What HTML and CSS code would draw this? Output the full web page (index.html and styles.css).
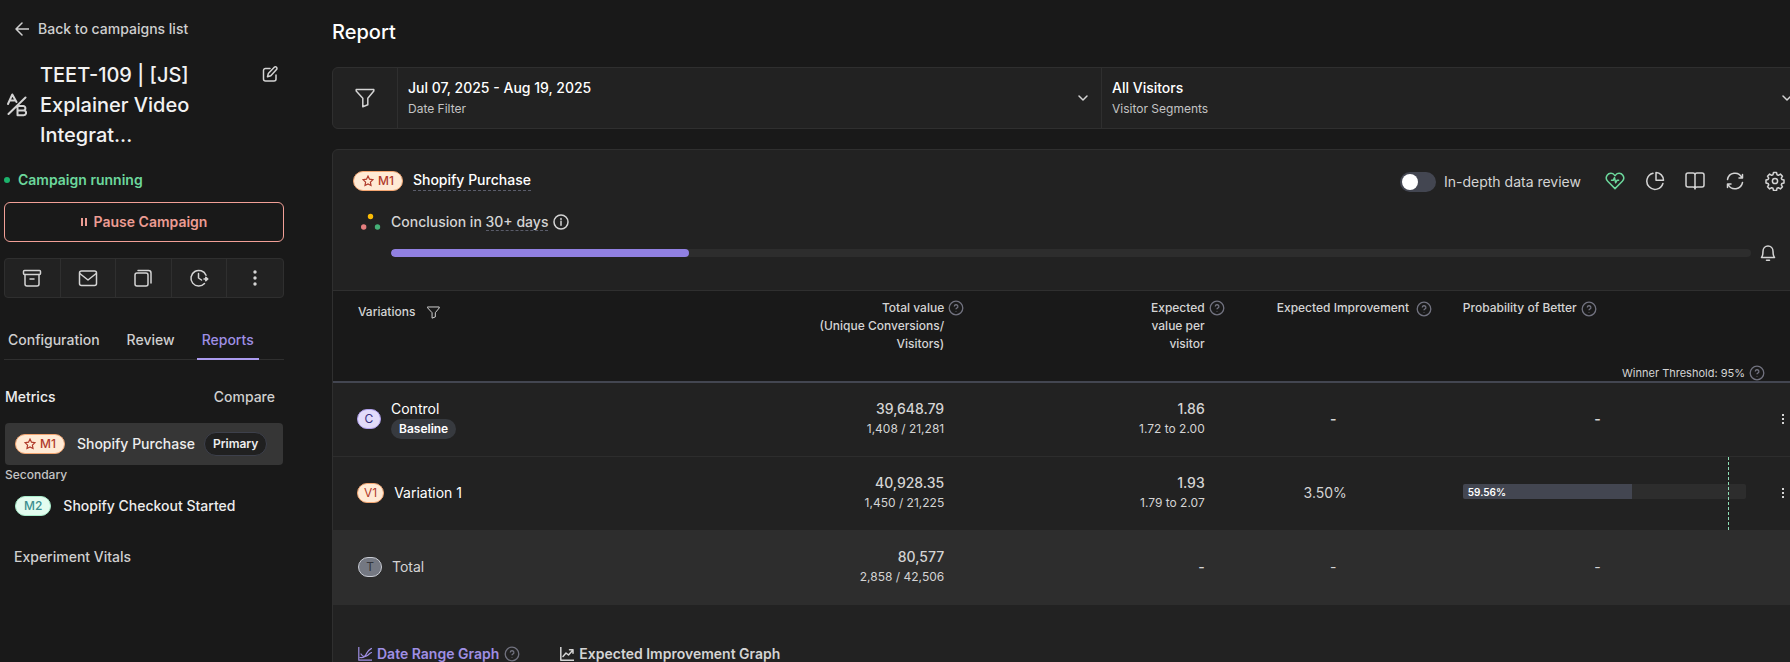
FILE: index.html
```html
<!DOCTYPE html>
<html lang="en">
<head>
<meta charset="utf-8">
<title>Campaign report</title>
<link rel="stylesheet" href="styles.css">
</head>
<body>
<svg class="defs" aria-hidden="true">
  <symbol id="help" viewBox="0 0 16 16"><circle cx="8" cy="8" r="6.8"/><path d="M6.3 6.6a1.8 1.8 0 1 1 2.5 1.6c-.6.3-.8.5-.8 1.1M8 11.2v.5"/></symbol>
  <symbol id="star" viewBox="0 0 12 12"><path d="M6 1.1l1.5 3.1 3.4.5-2.5 2.4.6 3.4L6 8.9l-3 1.6.6-3.4L1.1 4.700l3.400-.5z"/></symbol>
  <symbol id="funnel" viewBox="0 0 20 20"><path d="M1.200 1.500h17.600v1.600l-6 7.200v6.500l-5 1.900v-8.400l-6.600-7.200z"/></symbol>
  <symbol id="chevron" viewBox="0 0 12 12"><path d="M2 4l4 4 4-4"/></symbol>
  <symbol id="dots" viewBox="0 0 6 12"><path d="M2 1h2v2H2zM2 5h2v2H2zM2 9h2v2H2z"/></symbol>
</svg>
<div class="page">
  <aside class="sidebar">
    <a class="back" href="#"><svg class="icon" width="14" height="14" viewBox="0 0 14 14"><path d="M14 7H1M7 1L1 7l6 6"/></svg>Back to campaigns list</a>
    <div class="campaign">
      <svg class="icon ab" width="20" height="24" viewBox="0 0 20 24"><path d="M1 11l4.300-9.500L9.500 9M2.800 7.500h5.500M18.500 4.500L1.500 21M10.500 13h5.700a2.200 2.200 0 0 1 0 4.400h-5.700zM10.500 17.400h6.200a2.400 2.400 0 0 1 0 4.800h-6.200z"/></svg>
      <h1>TEET-109 | [JS] Explainer Video Integrat...</h1>
      <button class="plain edit" aria-label="Edit name"><svg class="icon" width="16" height="16" viewBox="0 0 16 16"><path d="M8 2.500H3.500a2 2 0 0 0-2 2v8.500a2 2 0 0 0 2 2H12a2 2 0 0 0 2-2V9M12.300 1.300a1.400 1.400 0 0 1 2.200 2.200L8.800 9.800l-3.300.9.800-3.100z"/></svg></button>
    </div>
    <p class="status">Campaign running</p>
    <button class="pause"><svg width="6" height="8" viewBox="0 0 6 8"><path d="M0 0h2v8H0zM4 0h2v8H4z"/></svg>Pause Campaign</button>
    <div class="tools">
      <button aria-label="Archive"><svg class="icon" width="20" height="20" viewBox="0 0 20 20"><rect x="1.500" y="2.500" width="17" height="4" rx="1"/><path d="M3 6.500V16a2 2 0 0 0 2 2h10a2 2 0 0 0 2-2V6.500M8 11h4"/></svg></button>
      <button aria-label="Mail"><svg class="icon" width="20" height="20" viewBox="0 0 20 20"><rect x="1.500" y="3" width="17" height="14.500" rx="2"/><path d="M1.800 5.500L10 12l8.200-6.500"/></svg></button>
      <button aria-label="Duplicate"><svg class="icon" width="20" height="20" viewBox="0 0 20 20"><rect x="2" y="5" width="13" height="13" rx="2"/><path d="M5 2.500h10.500a2.500 2.500 0 0 1 2.500 2.500V15"/></svg></button>
      <button aria-label="History"><svg class="icon" width="20" height="20" viewBox="0 0 20 20"><path d="M17 7.300a7.800 7.800 0 1 0-1.500 8.200M9.500 5.500V10l3 2M15 11h3.500M16.800 9.200l2 1.800-2 1.800z"/></svg></button>
      <button aria-label="More"><svg class="solid" width="20" height="20" viewBox="0 0 20 20"><circle cx="10" cy="4" r="1.700"/><circle cx="10" cy="10" r="1.700"/><circle cx="10" cy="16" r="1.700"/></svg></button>
    </div>
    <nav class="tabs"><a href="#">Configuration</a><a href="#">Review</a><a class="active" href="#">Reports</a></nav>
    <div class="metrics-head"><h2>Metrics</h2><a href="#">Compare</a></div>
    <a class="metric selected" href="#"><span class="pill orange"><svg width="12" height="12"><use href="#star"/></svg>M1</span>Shopify Purchase<span class="primary">Primary</span></a>
    <h3>Secondary</h3>
    <a class="metric" href="#"><span class="pill green">M2</span>Shopify Checkout Started</a>
    <a class="vitals" href="#">Experiment Vitals</a>
  </aside>

  <main>
    <h1>Report</h1>
    <section class="filters">
      <button class="filter-icon" aria-label="Filters"><svg class="icon" width="20" height="20"><use href="#funnel"/></svg></button>
      <button class="filter"><span><b>Jul 07, 2025 - Aug 19, 2025</b><small>Date Filter</small></span><svg class="icon" width="12" height="12"><use href="#chevron"/></svg></button>
      <button class="filter"><span><b>All Visitors</b><small>Visitor Segments</small></span><svg class="icon" width="12" height="12"><use href="#chevron"/></svg></button>
    </section>

    <section class="card">
      <header class="card-head">
        <span class="pill orange"><svg width="12" height="12"><use href="#star"/></svg>M1</span>
        <a class="dashed name" href="#">Shopify Purchase</a>
        <label class="review"><input type="checkbox" role="switch">In-depth data review</label>
        <div class="actions">
          <button class="plain health" aria-label="Health"><svg class="icon" width="20" height="20" viewBox="0 0 20 20"><path d="M10 17.600L2.700 10.200a4.700 4.700 0 0 1-.5-6C4 1.600 7.600 1.700 9.300 3.900l.7.800.7-.8c1.700-2.200 5.300-2.300 7.100.3a4.700 4.700 0 0 1-.5 6zM6.500 9.300h1.700l1.300-2.600 1.200 5 1.300-2.400h1.600"/></svg></button>
          <button class="plain" aria-label="Chart"><svg class="icon" width="20" height="20" viewBox="0 0 20 20"><path d="M8 2.200a8.200 8.200 0 1 0 9.900 10.300M11 1.500a7.800 7.800 0 0 1 7.500 7.800H11z"/></svg></button>
          <button class="plain" aria-label="Guide"><svg class="icon" width="20" height="20" viewBox="0 0 20 20"><path d="M10 4a2 2 0 0 0-2-2H3a2 2 0 0 0-2 2v10a2 2 0 0 0 2 2h5a2 2 0 0 1 2 2 2 2 0 0 1 2-2h5a2 2 0 0 0 2-2V4a2 2 0 0 0-2-2h-5a2 2 0 0 0-2 2zv14"/></svg></button>
          <button class="plain" aria-label="Refresh"><svg class="icon" width="20" height="20" viewBox="0 0 20 20"><path d="M2.500 8.500a7.600 7.600 0 0 1 14.300-2M17.500 11.500a7.600 7.600 0 0 1-14.300 2M17.500 3.500v3.500H14M2.500 16.500V13H6"/></svg></button>
          <button class="plain" aria-label="Settings"><svg class="icon" width="20" height="20" viewBox="0 0 20 20"><circle cx="10" cy="10" r="2.600"/><path d="M8.500 1.500h3l.5 2.200 1.400.6 2-1.200 2.100 2.100-1.200 1.900.6 1.400 2.100.5v2.900l-2.100.5-.6 1.500 1.200 1.900-2.100 2.100-2-1.200-1.400.6-.5 2.200h-3L8 17.300l-1.400-.6-2 1.200-2.100-2.100 1.200-1.900-.6-1.500-2.100-.5V9l2.100-.5.600-1.400-1.200-1.900 2.100-2.100 2 1.200L8 3.700z"/></svg></button>
        </div>
      </header>

      <div class="conclusion">
        <svg width="20" height="20" viewBox="0 0 20 20"><circle cx="9.500" cy="4.500" r="2.700" fill="#fbbc05"/><circle cx="2.700" cy="15" r="2.700" fill="#e57f7f"/><circle cx="16.500" cy="15" r="2.700" fill="#45b077"/></svg>
        <span>Conclusion in <a class="dashed" href="#">30+ days</a></span>
        <svg class="icon" width="16" height="16" viewBox="0 0 16 16"><circle cx="8" cy="8" r="7"/><path d="M8 7.300v4M8 4.400v1.200"/></svg>
      </div>
      <div class="progress">
        <div class="track"><div class="fill" style="width: 21.9%"></div></div>
        <button class="plain" aria-label="Notify me"><svg class="icon" width="18" height="18" viewBox="0 0 18 18"><path d="M2.500 13.500c1.300-1.600 1.500-3.200 1.500-6.200C4 4 6.200 2 9 2s5 2 5 5.300c0 3 .2 4.600 1.500 6.200zM7.500 16.300h3"/></svg></button>
      </div>

      <table>
        <colgroup><col class="c-name"><col class="c-total"><col class="c-value"><col class="c-improve"><col class="c-prob"><col class="c-menu"></colgroup>
        <thead>
          <tr>
            <th scope="col"><div class="head first">Variations<svg class="icon" width="13" height="13"><use href="#funnel"/></svg></div></th>
            <th scope="col"><div class="head right"><span>Total value<br>(Unique Conversions/<br>Visitors)</span><svg class="help" width="16" height="18"><use href="#help"/></svg></div></th>
            <th scope="col"><div class="head right"><span>Expected<br>value per<br>visitor</span><svg class="help" width="16" height="18"><use href="#help"/></svg></div></th>
            <th scope="col"><div class="head improve">Expected Improvement<svg class="help" width="16" height="20"><use href="#help"/></svg></div></th>
            <th scope="col" colspan="2"><div class="head prob">Probability of Better<svg class="help" width="16" height="20"><use href="#help"/></svg></div><div class="threshold">Winner Threshold: 95%<svg class="help" width="16" height="16"><use href="#help"/></svg></div></th>
          </tr>
        </thead>
        <tbody>
          <tr>
            <td><div class="variation"><span class="pill violet">C</span><div>Control<span class="baseline">Baseline</span></div></div></td>
            <td class="num">39,648.79<small>1,408 / 21,281</small></td>
            <td class="num">1.86<small>1.72 to 2.00</small></td>
            <td class="mid strong">-</td>
            <td class="mid strong">-</td>
            <td class="menu"><button class="plain" aria-label="Control menu"><svg class="solid" width="6" height="12"><use href="#dots"/></svg></button></td>
          </tr>
          <tr>
            <td><div class="variation"><span class="pill orange">V1</span>Variation 1</div></td>
            <td class="num">40,928.35<small>1,450 / 21,225</small></td>
            <td class="num">1.93<small>1.79 to 2.07</small></td>
            <td class="mid pct">3.50%</td>
            <td class="chart"><div class="bar"><div class="bar-fill" style="width: 59.56%">59.56%</div></div><span class="limit"></span></td>
            <td class="menu"><button class="plain" aria-label="Variation 1 menu"><svg class="solid" width="6" height="12"><use href="#dots"/></svg></button></td>
          </tr>
          <tr class="total">
            <td><div class="variation"><span class="pill grey">T</span>Total</div></td>
            <td class="num">80,577<small>2,858 / 42,506</small></td>
            <td class="num">-</td>
            <td class="mid">-</td>
            <td class="mid">-</td>
            <td></td>
          </tr>
        </tbody>
      </table>

      <nav class="graphs">
        <a class="active" href="#"><svg class="icon" width="14" height="14" viewBox="0 0 14 14"><path stroke-width="1.200" d="M.8 0v13.200H14M2 10.500c3.500.5 5.500-1 6.500-4S11 2.800 13.500 1.500M3 7c1.500 2.500 3.500 3 5.500 2s2.500-2.500 5-3.500"/></svg>Date Range Graph<svg class="help" width="16" height="16"><use href="#help"/></svg></a>
        <a href="#"><svg class="icon" width="14" height="14" viewBox="0 0 14 14"><path d="M.8 0v13.200H14M3 9.500L6 6l2.500 2L13 3M9.500 2.800H13v3.500"/></svg>Expected Improvement Graph</a>
      </nav>
    </section>
  </main>
</div>
</body>
</html>
```

FILE: styles.css
```css
* { box-sizing: border-box; }

body {
  margin: 0;
  height: 100vh;
  overflow: hidden;
  background: #191919;
  color: #d4d4d4;
  font: 500 14px/20px Inter, "Liberation Sans", sans-serif;
}

h1, h2, h3, p { margin: 0; font: inherit; }
a { color: inherit; text-decoration: none; }
button { font: inherit; color: inherit; background: none; border: 0; padding: 0; cursor: pointer; }
small { font-size: 12px; font-weight: 400; }
svg { flex: none; display: block; }
.defs { position: absolute; width: 0; height: 0; }
.icon { fill: none; stroke: currentColor; stroke-width: 1.5; stroke-linecap: round; stroke-linejoin: round; }
.solid { fill: currentColor; }
.help { fill: none; stroke: #71727f; stroke-width: 1.3; }
.plain { display: flex; }

.page { display: flex; height: 100%; }

/* Sidebar */
.sidebar { flex: none; width: 284px; padding: 19px 0 0 4px; display: flex; flex-direction: column; }
.back { display: flex; align-items: center; gap: 9px; padding-left: 11px; color: #cfcfcf; }
.campaign { display: flex; align-items: center; gap: 13px; margin-top: 21px; padding: 0 6px 0 3px; }
.campaign .ab { stroke-width: 2; }
.campaign h1 { flex: 1; padding-right: 40px; font-size: 20px; line-height: 30px; color: #f2f2f2; }
.edit { align-self: flex-start; margin-top: 6px; }
.status { display: flex; align-items: center; gap: 8px; margin-top: 20px; font-weight: 600; color: #6cd79c; }
.status::before { content: ""; width: 6px; height: 6px; border-radius: 50%; background: #1cb36c; }
.pause { display: flex; align-items: center; justify-content: center; gap: 7px; height: 40px; margin-top: 12px; border: 1px solid #f2a097; border-radius: 6px; color: #ec9c93; fill: currentColor; font-weight: 600; }
.tools { display: grid; grid-template-columns: repeat(5, 1fr); height: 40px; margin-top: 16px; background: #222; border: 1px solid #2f2f2f; border-radius: 4px; }
.tools button { display: flex; align-items: center; justify-content: center; border-right: 1px solid #2f2f2f; }
.tools button:last-child { border-right: 0; }
.tabs { display: flex; gap: 17px; margin-top: 32px; border-bottom: 1px solid #2f2f2f; color: #cfcfcf; }
.tabs a { padding: 0 5px 8px; }
.tabs a:first-child { padding-left: 4px; }
.tabs .active { margin-bottom: -1px; border-bottom: 2px solid #ab9bee; color: #9f8fe4; }
.metrics-head { display: flex; justify-content: space-between; margin-top: 27px; padding: 0 9px 0 1px; color: #cfcfcf; }
.metrics-head h2 { color: #ededed; }
.metric { display: flex; align-items: center; gap: 12px; height: 42px; margin: 0 1px; padding-left: 10px; color: #ededed; }
.metric.selected { margin-top: 16px; border-radius: 4px; background: #363636; }
.primary { height: 24px; margin-left: -3px; padding: 0 8px; border: 1px solid #3d404b; border-radius: 12px; background: #202020; font-size: 12px; font-weight: 600; line-height: 21px; }
.sidebar h3 { padding-left: 1px; font-size: 12px; color: #c4c4c4; }
.vitals { margin-top: 20px; padding-left: 10px; color: #cfcfcf; }

.pill { flex: none; display: inline-flex; align-items: center; justify-content: center; gap: 4px; min-width: 24px; height: 20px; padding: 0 8px; border: 1px solid; border-radius: 10px; font-size: 12px; line-height: 18px; }
.pill svg { fill: none; stroke: currentColor; stroke-width: 1.2; }
.pill.orange { background: #ffead5; border-color: #f3a571; color: #b03a2b; }
.pill.green { background: #e3fcef; border-color: #a7ecca; color: #3d8f8f; }
.pill.violet { background: #e2dbfa; border-color: #b0a0ee; color: #372e80; }
.pill.grey { background: #747882; border-color: #c9ccd4; color: #33353c; }
.variation .pill { padding: 0 6px; }

/* Report: runs on past the right side of the window */
main { flex: 1; min-width: 0; margin: 0 -16px 0 48px; padding-top: 17px; }
main > h1 { font-size: 20px; line-height: 30px; color: #fff; }
.filters { display: flex; height: 62px; margin-top: 20px; background: #222; border: 1px solid #2f2f2f; border-radius: 6px; }
.filter-icon { flex: none; width: 64px; display: flex; align-items: center; justify-content: center; }
.filter { flex: 1; display: flex; align-items: center; justify-content: space-between; padding: 0 12px 0 10px; border-left: 1px solid #2f2f2f; text-align: left; }
.filter b { display: block; font-weight: 500; line-height: 22px; color: #fff; }
.filter small { display: block; line-height: 20px; color: #c4c4c4; }

.card { margin-top: 20px; background: #222; border: 1px solid #2f2f2f; border-radius: 6px; }
.card-head { display: flex; align-items: center; height: 20px; margin-top: 21px; padding: 0 20px; }
.dashed { border-bottom: 1px dashed #5b5d6b; }
.name { margin-left: 10px; padding-bottom: 2px; color: #fff; line-height: 17px; }
.review { display: flex; align-items: center; gap: 8px; margin: 2px 24px 0 auto; font-weight: 400; }
.review input { appearance: none; display: flex; align-items: center; width: 36px; height: 20px; margin: 0; padding: 2px; border-radius: 10px; background: #434651; }
.review input::before { content: ""; width: 16px; height: 16px; border-radius: 50%; background: #fff; }
.actions { display: flex; gap: 20px; }
.health { color: #6cd79c; }
.conclusion { display: flex; align-items: center; margin: 21px 0 0 28px; }
.conclusion span { margin: 0 5px 0 10px; }
.progress { display: flex; align-items: center; gap: 8px; margin: 12px 28px 0 58px; }
.track { flex: 1; height: 8px; border-radius: 4px; background: #2d2d2d; overflow: hidden; }
.fill { height: 100%; border-radius: 4px; background: #9180e2; }

table { width: 100%; margin-top: 28px; border-collapse: separate; border-spacing: 0; table-layout: fixed; border-top: 1px solid #2f2f2f; }
.c-total { width: 13.6%; }
.c-value { width: 17.7%; }
.c-improve { width: 12.3%; }
.c-prob { width: 23.6%; }
.c-menu { width: 2.3%; }
th { height: 92px; padding: 8px 0 0; border-bottom: 2px solid #434651; background: #191919; font-size: 12px; font-weight: 500; line-height: 18px; text-align: left; vertical-align: top; white-space: nowrap; }
.head { display: flex; align-items: flex-start; gap: 4px; }
.head.first { align-items: center; gap: 12px; padding: 4px 0 0 25px; }
.head.right { justify-content: flex-end; padding-right: 18px; text-align: right; }
.head.improve { gap: 7px; height: 18px; padding-left: 34px; }
.head.prob { height: 18px; padding-left: 39px; }
.threshold { display: flex; justify-content: flex-end; gap: 4px; margin-top: 48px; padding-right: 40px; font-size: 11px; font-weight: 400; line-height: 16px; }
td { height: 74px; padding: 0 0 2px; border-bottom: 1px solid #2d2d2d; }
.variation { display: flex; align-items: center; gap: 10px; padding-left: 24px; color: #fff; font-weight: 400; }
.baseline { display: block; padding: 0 8px; border-radius: 10px; background: #373a3f; font-size: 12px; font-weight: 600; }
.num { padding-right: 38px; text-align: right; }
.num small { display: block; }
.mid { text-align: center; font-weight: 400; }
.mid.strong { font-weight: 600; }
.mid.pct { padding-right: 16px; }
.menu { padding-left: 9px; }
.chart { position: relative; padding: 0 25px 4px 39px; }
.bar { height: 15px; border-radius: 2px; background: #2d2d2d; overflow: hidden; }
.bar-fill { height: 100%; padding-left: 5px; background: #434651; color: #fff; font-size: 10px; font-weight: 600; line-height: 16px; }
.limit { position: absolute; top: 0; bottom: 0; right: 42px; width: 1px; background: repeating-linear-gradient(#8fe0b6 0 3px, transparent 3px 5px); }
.total td { background: #2d2d2d; }
.total .variation { padding-left: 25px; color: #d4d4d4; }

.graphs { display: flex; gap: 40px; margin-top: 38px; padding: 0 25px 24px; }
.graphs a { display: flex; align-items: center; gap: 5px; line-height: 22px; font-weight: 600; }
.graphs .active { color: #9f8fe4; }
```
